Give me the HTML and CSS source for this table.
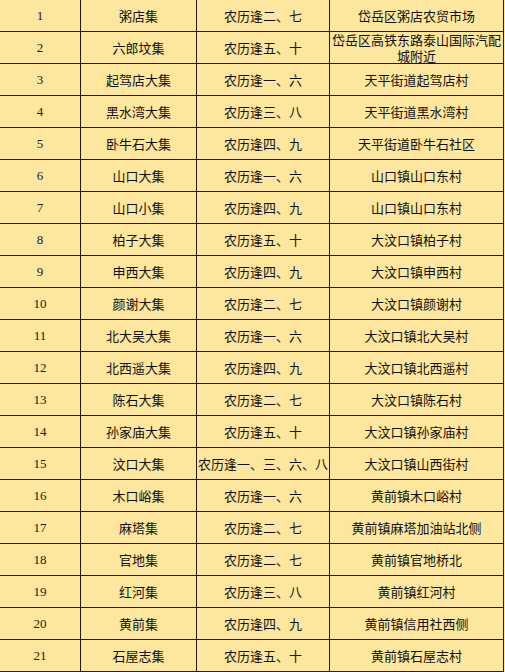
FILE: index.html
```html
<!DOCTYPE html>
<html lang="zh-CN">
<head>
<meta charset="utf-8">
<title>集市表</title>
<link rel="stylesheet" href="styles.css">
</head>
<body>
<div class="grid">
  <div class="c num">1</div><div class="c">粥店集</div><div class="c">农历逢二、七</div><div class="c">岱岳区粥店农贸市场</div>
  <div class="c num">2</div><div class="c">六郎坟集</div><div class="c">农历逢五、十</div><div class="c wrap">岱岳区高铁东路泰山国际汽配城附近</div>
  <div class="c num">3</div><div class="c">起驾店大集</div><div class="c">农历逢一、六</div><div class="c">天平街道起驾店村</div>
  <div class="c num">4</div><div class="c">黑水湾大集</div><div class="c">农历逢三、八</div><div class="c">天平街道黑水湾村</div>
  <div class="c num">5</div><div class="c">卧牛石大集</div><div class="c">农历逢四、九</div><div class="c">天平街道卧牛石社区</div>
  <div class="c num">6</div><div class="c">山口大集</div><div class="c">农历逢一、六</div><div class="c">山口镇山口东村</div>
  <div class="c num">7</div><div class="c">山口小集</div><div class="c">农历逢四、九</div><div class="c">山口镇山口东村</div>
  <div class="c num">8</div><div class="c">柏子大集</div><div class="c">农历逢五、十</div><div class="c">大汶口镇柏子村</div>
  <div class="c num">9</div><div class="c">申西大集</div><div class="c">农历逢四、九</div><div class="c">大汶口镇申西村</div>
  <div class="c num">10</div><div class="c">颜谢大集</div><div class="c">农历逢二、七</div><div class="c">大汶口镇颜谢村</div>
  <div class="c num">11</div><div class="c">北大吴大集</div><div class="c">农历逢一、六</div><div class="c">大汶口镇北大吴村</div>
  <div class="c num">12</div><div class="c">北西遥大集</div><div class="c">农历逢四、九</div><div class="c">大汶口镇北西遥村</div>
  <div class="c num">13</div><div class="c">陈石大集</div><div class="c">农历逢二、七</div><div class="c">大汶口镇陈石村</div>
  <div class="c num">14</div><div class="c">孙家庙大集</div><div class="c">农历逢五、十</div><div class="c">大汶口镇孙家庙村</div>
  <div class="c num">15</div><div class="c">汶口大集</div><div class="c">农历逢一、三、六、八</div><div class="c">大汶口镇山西街村</div>
  <div class="c num">16</div><div class="c">木口峪集</div><div class="c">农历逢一、六</div><div class="c">黄前镇木口峪村</div>
  <div class="c num">17</div><div class="c">麻塔集</div><div class="c">农历逢二、七</div><div class="c">黄前镇麻塔加油站北侧</div>
  <div class="c num">18</div><div class="c">官地集</div><div class="c">农历逢二、七</div><div class="c">黄前镇官地桥北</div>
  <div class="c num">19</div><div class="c">红河集</div><div class="c">农历逢三、八</div><div class="c">黄前镇红河村</div>
  <div class="c num">20</div><div class="c">黄前集</div><div class="c">农历逢四、九</div><div class="c">黄前镇信用社西侧</div>
  <div class="c num">21</div><div class="c">石屋志集</div><div class="c">农历逢五、十</div><div class="c">黄前镇石屋志村</div>
</div>
</body>
</html>
```
FILE: styles.css
```css
html, body {
  margin: 0;
  padding: 0;
  background: #fde69d;
}
body {
  font-family: "Noto Sans CJK SC", "Noto Sans", sans-serif;
  font-size: 13px;
  color: #111111;
  overflow: hidden;
}
.grid {
  display: grid;
  grid-template-columns: 81px 116px 133px 174px;
  grid-auto-rows: 32px;
  width: 504px;
}
.c {
  box-sizing: border-box;
  border-right: 1px solid #24170c;
  border-bottom: 1px solid #24170c;
  display: flex;
  align-items: center;
  justify-content: center;
  text-align: center;
  padding: 0 1px;
  white-space: nowrap;
  line-height: 16px;
}
.wrap {
  white-space: normal;
  padding: 0 2px;
}
.num {
  font-family: "Liberation Serif", "DejaVu Serif", serif;
  font-size: 13px;
  color: #222222;
}
```
